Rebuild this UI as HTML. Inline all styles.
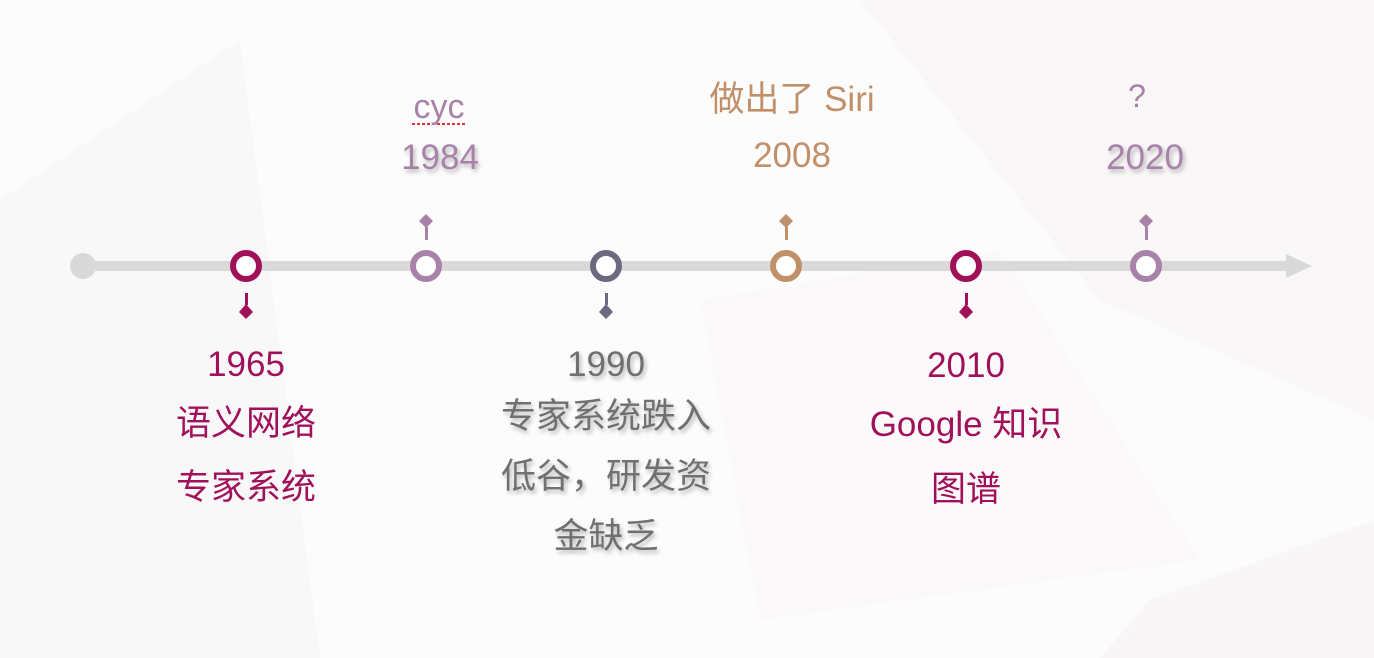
<!DOCTYPE html>
<html><head><meta charset="utf-8"><style>
html,body{margin:0;padding:0}
body{width:1374px;height:658px;position:relative;overflow:hidden;background:#fdfcfc;font-family:"Liberation Sans","Noto Sans CJK SC",sans-serif}
.t{position:absolute;transform:translateX(-50%);white-space:nowrap;font-size:35px;line-height:1;text-shadow:2px 3px 4px rgba(0,0,0,0.28)}
.c1{color:#a1115a}.c2{color:#a882a8}.c3{color:#707070}.c4{color:#c0906a}
</style></head><body>
<svg width="1374" height="658" style="position:absolute;left:0;top:0">
<polygon points="0,200 240,40 320,658 0,658" fill="#f9f8f9"/>
<polygon points="860,0 1374,0 1374,420 1100,300" fill="#faf7f8"/>
<polygon points="700,300 1000,250 1200,560 760,620" fill="#fbf9fa"/>
<polygon points="1150,600 1374,520 1374,658 1100,658" fill="#f9f6f7"/>
<line x1="83" y1="266" x2="1290" y2="266" stroke="#d9d9d9" stroke-width="10"/>
<polygon points="1286,254 1312,266 1286,278" fill="#d9d9d9"/>
<circle cx="83" cy="266" r="13" fill="#d9d9d9"/>
<g fill="#fff" stroke-width="6">
<circle cx="246" cy="266" r="13" stroke="#a1115a"/>
<circle cx="426" cy="266" r="13" stroke="#a882a8"/>
<circle cx="606" cy="266" r="13" stroke="#6e6880"/>
<circle cx="786" cy="266" r="13" stroke="#c0906a"/>
<circle cx="966" cy="266" r="13" stroke="#a1115a"/>
<circle cx="1146" cy="266" r="13" stroke="#a882a8"/>
</g>
<g>
<rect x="245" y="293" width="3" height="12" fill="#a1115a"/><polygon points="246,304 253,312 246,319 239,312" fill="#a1115a"/>
<rect x="605" y="293" width="3" height="12" fill="#6e6880"/><polygon points="606,304 613,312 606,319 599,312" fill="#6e6880"/>
<rect x="965" y="293" width="3" height="12" fill="#a1115a"/><polygon points="966,304 973,312 966,319 959,312" fill="#a1115a"/>
<rect x="425" y="227" width="3" height="13" fill="#a882a8"/><polygon points="426,214 433,221 426,228 419,221" fill="#a882a8"/>
<rect x="785" y="227" width="3" height="13" fill="#c0906a"/><polygon points="786,214 793,221 786,228 779,221" fill="#c0906a"/>
<rect x="1145" y="227" width="3" height="13" fill="#a882a8"/><polygon points="1146,214 1153,221 1146,228 1139,221" fill="#a882a8"/>
</g>
<line x1="412" y1="124" x2="466" y2="124" stroke="#e83030" stroke-width="2" stroke-dasharray="3,2"/>
</svg>
<div class="t c2" style="left:439px;top:90px;font-size:34px;text-shadow:none">cyc</div>
<div class="t c2" style="left:440px;top:140px">1984</div>
<div class="t c4" style="left:792px;top:82px;text-shadow:none">做出了 Siri</div>
<div class="t c4" style="left:792px;top:138px;text-shadow:none">2008</div>
<div class="t c2" style="left:1137px;top:80px;font-size:32px;text-shadow:none">?</div>
<div class="t c2" style="left:1145px;top:140px">2020</div>
<div class="t c1" style="left:246px;top:347px;text-shadow:none">1965</div>
<div class="t c1" style="left:246px;top:406px;text-shadow:none">语义网络</div>
<div class="t c1" style="left:246px;top:470px;text-shadow:none">专家系统</div>
<div class="t c3" style="left:606px;top:347px">1990</div>
<div class="t c3" style="left:606px;top:399px">专家系统跌入</div>
<div class="t c3" style="left:606px;top:459px">低谷，研发资</div>
<div class="t c3" style="left:606px;top:519px">金缺乏</div>
<div class="t c1" style="left:966px;top:348px;text-shadow:none">2010</div>
<div class="t c1" style="left:966px;top:407px;text-shadow:none">Google 知识</div>
<div class="t c1" style="left:966px;top:472px;text-shadow:none">图谱</div>
</body></html>
